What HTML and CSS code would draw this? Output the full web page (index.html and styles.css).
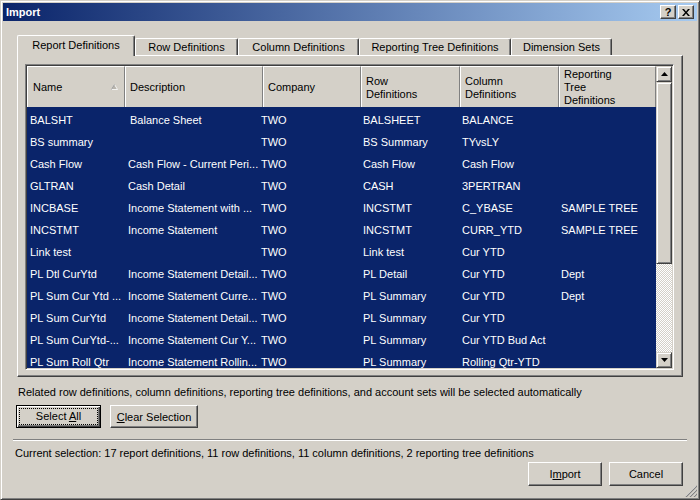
FILE: index.html
```html
<!DOCTYPE html>
<html>
<head>
<meta charset="utf-8">
<link rel="stylesheet" href="styles.css">
</head>
<body>
<div class="window">
  <div class="titlebar">
    <span class="title">Import</span>
    <div class="tb-buttons">
      <div class="tb-btn help">?</div>
      <div class="tb-btn"><svg width="8" height="7" viewBox="0 0 8 7"><path d="M0 0h2l2 2.5L6 0h2L5 3.5 8 7H6L4 4.5 2 7H0l3-3.5z" fill="#000"/></svg></div>
    </div>
  </div>
  <div class="content">
    <div class="tabs">
      <div class="tab active t-report">Report Definitions</div>
      <div class="tab t-row">Row Definitions</div>
      <div class="tab t-col">Column Definitions</div>
      <div class="tab t-tree">Reporting Tree Definitions</div>
      <div class="tab t-dim">Dimension Sets</div>
    </div>
    <div class="panel">
      <div class="listbox">
        <div class="list-main">
          <div class="header">
            <div class="hcell hname"><span>Name</span><svg class="sort" width="7" height="6" viewBox="0 0 7 6"><path d="M3.5 0.5L6.5 5.5H0.5Z" fill="#b8b4ac" stroke="#fff" stroke-width="0.8"/><path d="M3.5 0.5L0.5 5.5" stroke="#808080" stroke-width="0.8"/></svg></div>
            <div class="hcell">Description</div>
            <div class="hcell">Company</div>
            <div class="hcell">Row<br>Definitions</div>
            <div class="hcell">Column<br>Definitions</div>
            <div class="hcell">Reporting<br>Tree<br>Definitions</div>
          </div>
          <div class="rows">
            <div class="row"><span class="c1">BALSHT</span><span class="c2 indent">Balance Sheet</span><span class="c3">TWO</span><span class="c4">BALSHEET</span><span class="c5">BALANCE</span><span class="c6"></span></div>
            <div class="row"><span class="c1">BS summary</span><span class="c2"></span><span class="c3">TWO</span><span class="c4">BS Summary</span><span class="c5">TYvsLY</span><span class="c6"></span></div>
            <div class="row"><span class="c1">Cash Flow</span><span class="c2">Cash Flow - Current Peri...</span><span class="c3">TWO</span><span class="c4">Cash Flow</span><span class="c5">Cash Flow</span><span class="c6"></span></div>
            <div class="row"><span class="c1">GLTRAN</span><span class="c2">Cash Detail</span><span class="c3">TWO</span><span class="c4">CASH</span><span class="c5">3PERTRAN</span><span class="c6"></span></div>
            <div class="row"><span class="c1">INCBASE</span><span class="c2">Income Statement with ...</span><span class="c3">TWO</span><span class="c4">INCSTMT</span><span class="c5">C_YBASE</span><span class="c6">SAMPLE TREE</span></div>
            <div class="row"><span class="c1">INCSTMT</span><span class="c2">Income Statement</span><span class="c3">TWO</span><span class="c4">INCSTMT</span><span class="c5">CURR_YTD</span><span class="c6">SAMPLE TREE</span></div>
            <div class="row"><span class="c1">Link test</span><span class="c2"></span><span class="c3">TWO</span><span class="c4">Link test</span><span class="c5">Cur YTD</span><span class="c6"></span></div>
            <div class="row"><span class="c1">PL Dtl CurYtd</span><span class="c2">Income Statement Detail...</span><span class="c3">TWO</span><span class="c4">PL Detail</span><span class="c5">Cur YTD</span><span class="c6">Dept</span></div>
            <div class="row"><span class="c1">PL Sum Cur Ytd ...</span><span class="c2">Income Statement Curre...</span><span class="c3">TWO</span><span class="c4">PL Summary</span><span class="c5">Cur YTD</span><span class="c6">Dept</span></div>
            <div class="row"><span class="c1">PL Sum CurYtd</span><span class="c2">Income Statement Detail...</span><span class="c3">TWO</span><span class="c4">PL Summary</span><span class="c5">Cur YTD</span><span class="c6"></span></div>
            <div class="row"><span class="c1">PL Sum CurYtd-...</span><span class="c2">Income Statement Cur Y...</span><span class="c3">TWO</span><span class="c4">PL Summary</span><span class="c5">Cur YTD Bud Act</span><span class="c6"></span></div>
            <div class="row"><span class="c1">PL Sum Roll Qtr</span><span class="c2">Income Statement Rollin...</span><span class="c3">TWO</span><span class="c4">PL Summary</span><span class="c5">Rolling Qtr-YTD</span><span class="c6"></span></div>
          </div>
        </div>
        <div class="vscroll">
          <div class="sbtn"><svg width="7" height="4" viewBox="0 0 7 4"><path d="M3.5 0L7 4H0Z" fill="#000"/></svg></div>
          <div class="thumb"></div>
          <div class="track"></div>
          <div class="sbtn"><svg width="7" height="4" viewBox="0 0 7 4"><path d="M0 0H7L3.5 4Z" fill="#000"/></svg></div>
        </div>
      </div>
    </div>
    <p class="note">Related row definitions, column definitions, reporting tree definitions, and account sets will be selected automatically</p>
    <div class="actions-top">
      <div class="btn default w-select"><span class="focus">Select <u>A</u>ll</span></div>
      <div class="btn w-clear"><span><u>C</u>lear Selection</span></div>
    </div>
    <div class="separator"></div>
    <p class="status">Current selection: 17 report definitions, 11 row definitions, 11 column definitions, 2 reporting tree definitions</p>
    <div class="actions-bottom">
      <div class="btn w-dlg"><span>I<u>m</u>port</span></div>
      <div class="btn w-dlg"><span>Cancel</span></div>
    </div>
  </div>
  <svg class="grip" width="12" height="12" viewBox="0 0 12 12">
    <path d="M11 1L1 11M11 5L5 11M11 9L9 11" stroke="#fff" stroke-width="1"/>
    <path d="M12 1L1 12M12 5L5 12M12 9L9 12" stroke="#808080" stroke-width="1.2"/>
  </svg>
</div>
</body>
</html>
```

FILE: styles.css
```css
html, body {
  margin: 0;
  padding: 0;
  background: #D4D0C8;
}

.window {
  position: relative;
  width: 700px;
  height: 500px;
  box-sizing: border-box;
  border: 1px solid;
  border-color: #D4D0C8 #404040 #404040 #D4D0C8;
  box-shadow: inset 1px 1px #fff, inset -1px -1px #808080;
  padding: 2px;
  background: #D4D0C8;
  font-family: "Liberation Sans", Arial, sans-serif;
  font-size: 11px;
  color: #000;
  overflow: hidden;
}

.titlebar {
  height: 18px;
  background: linear-gradient(to right, #0A246A, #A6CAF0);
  display: flex;
  align-items: center;
  justify-content: space-between;
  padding: 0 3px 0 3px;
}

.title {
  color: #fff;
  font-weight: bold;
  font-size: 11px;
  line-height: 18px;
}

.tb-buttons {
  display: flex;
  gap: 2px;
}

.tb-btn {
  width: 16px;
  height: 14px;
  box-sizing: border-box;
  background: #D4D0C8;
  border: 1px solid;
  border-color: #fff #404040 #404040 #fff;
  box-shadow: inset -1px -1px #808080;
  display: flex;
  align-items: center;
  justify-content: center;
}

.tb-btn.help {
  font-weight: bold;
  font-size: 11px;
  line-height: 12px;
}

.content {
  padding: 14px 14px 0 14px;
}

.tabs {
  display: flex;
  align-items: flex-end;
  height: 20px;
  position: relative;
  z-index: 1;
}

.tab {
  height: 17px;
  box-sizing: border-box;
  background: #D4D0C8;
  border-top: 1px solid #fff;
  border-left: 1px solid #fff;
  border-right: 1px solid #404040;
  box-shadow: inset -1px 0 #808080;
  border-radius: 2px 2px 0 0;
  text-align: center;
  line-height: 16px;
  white-space: nowrap;
}

.tab.active {
  height: 21px;
  margin-bottom: -1px;
  padding-top: 2px;
  line-height: 14px;
}

.t-report { width: 118px; }
.t-row { width: 103px; }
.t-col { width: 121px; }
.t-tree { width: 152px; }
.t-dim { width: 101px; }

.panel {
  height: 322px;
  box-sizing: border-box;
  border: 1px solid;
  border-color: #fff #404040 #404040 #fff;
  box-shadow: inset -1px -1px #808080;
  padding: 8px 8px 0 7px;
}

.listbox {
  height: 306px;
  box-sizing: border-box;
  border: 1px solid;
  border-color: #808080 #fff #fff #808080;
  box-shadow: inset 1px 1px #404040, inset -1px -1px #D4D0C8;
  padding: 1px;
  display: flex;
}

.list-main {
  flex: 1;
  min-width: 0;
  overflow: hidden;
  display: flex;
  flex-direction: column;
}

.header {
  height: 41px;
  flex: none;
  display: grid;
  grid-template-columns: 98px 138px 98px 99px 99px 1fr;
  background: #D4D0C8;
}

.hcell {
  box-sizing: border-box;
  border-left: 1px solid #fff;
  border-top: 1px solid #fff;
  border-right: 1px solid #808080;
  border-bottom: 1px solid #808080;
  padding-left: 4px;
  padding-top: 1px;
  display: flex;
  align-items: center;
  line-height: 13px;
  white-space: nowrap;
}

.hname {
  padding-left: 5px;
  padding-right: 6px;
  justify-content: space-between;
}

.sort {
  display: block;
  margin-top: -2px;
}

.rows {
  flex: 1;
  overflow: hidden;
  background: #0A246A;
}

.row {
  height: 22px;
  box-sizing: border-box;
  padding-top: 3px;
  display: grid;
  grid-template-columns: 98px 134px 102px 99px 99px 1fr;
  background: #0A246A;
  color: #fff;
  line-height: 20px;
}

.row span {
  white-space: nowrap;
  overflow-x: clip;
  overflow-y: visible;
}

.c1, .c2 { padding-left: 3px; }
.c3, .c4, .c5, .c6 { padding-left: 2px; }
.c2.indent { padding-left: 5px; }

.vscroll {
  width: 16px;
  flex: none;
  display: flex;
  flex-direction: column;
}

.sbtn, .thumb {
  box-sizing: border-box;
  background: #D4D0C8;
  border: 1px solid;
  border-color: #D4D0C8 #404040 #404040 #D4D0C8;
  box-shadow: inset 1px 1px #fff, inset -1px -1px #808080;
}

.sbtn {
  height: 16px;
  display: flex;
  align-items: center;
  justify-content: center;
}

.thumb {
  height: 182px;
}

.track {
  flex: 1;
  background-color: #fff;
  background-image: repeating-conic-gradient(#D4D0C8 0 25%, #fff 0 50%);
  background-size: 2px 2px;
}

.note {
  margin: 8px 0 0 1px;
  line-height: 14px;
  white-space: nowrap;
}

.actions-top {
  margin-top: 6px;
  margin-left: -1px;
  display: flex;
  gap: 9px;
}

.btn {
  height: 23px;
  box-sizing: border-box;
  background: #D4D0C8;
  border: 1px solid;
  border-color: #fff #404040 #404040 #fff;
  box-shadow: inset -1px -1px #808080;
  display: flex;
  align-items: center;
  justify-content: center;
  white-space: nowrap;
}

.btn.default {
  border: 1px solid #000;
  box-shadow: inset 1px 1px #fff, inset -1px -1px #404040, inset -2px -2px #808080;
  padding: 3px;
  align-items: stretch;
}

.focus {
  display: block;
  flex: 1;
  text-align: center;
  line-height: 15px;
  outline: 1px dotted #000;
  outline-offset: 0;
}

.w-select { width: 85px; }
.w-clear { width: 88px; }
.w-dlg { width: 74px; height: 24px; }

.separator {
  height: 0;
  border-top: 1px solid #808080;
  border-bottom: 1px solid #fff;
  margin: 11px -4px 0 -4px;
}

.status {
  margin: 5px 0 0 -2px;
  line-height: 14px;
  white-space: nowrap;
}

.actions-bottom {
  margin-top: 2px;
  display: flex;
  justify-content: flex-end;
  gap: 7px;
}

.grip {
  position: absolute;
  right: 2px;
  bottom: 2px;
}
```
